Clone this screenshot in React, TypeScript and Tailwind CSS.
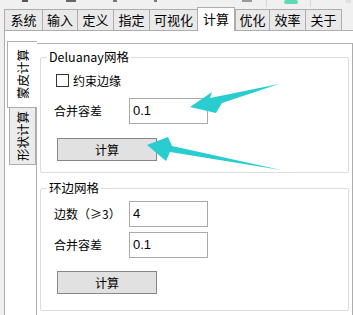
import React from "react";

const font = { fontFamily: '"Noto Sans CJK SC", "Noto Sans", sans-serif' };

function TopTab({ label, w, selected }: { label: string; w: number; selected?: boolean }) {
  return (
    <div
      style={{ width: w }}
      className={
        selected
          ? "relative z-20 -mb-px flex h-[24px] items-start justify-center border border-b-0 border-[#adadad] bg-white pt-[2px] text-[13px] leading-[18px] text-black"
          : "flex h-[21px] items-center justify-center border border-b-0 border-[#adadad] bg-[#e9e9e9] text-[13px] leading-[18px] text-black -mr-px"
      }
    >
      {label}
    </div>
  );
}

function GroupBox({ title, h, children }: { title: string; h: number; children: React.ReactNode }) {
  return (
    <div style={{ height: h }} className="flex w-[309px] flex-col rounded-[2px] border border-[#dcdcdc]">
      <div className="-mt-[9px] ml-[6px] h-[16px] w-fit bg-white px-[2px] text-[12.5px] leading-[16px] text-black">
        {title}
      </div>
      {children}
    </div>
  );
}

function Field({ label, value, mt }: { label: string; value: string; mt: number }) {
  return (
    <div style={{ marginTop: mt }} className="flex h-[26px] items-center pl-[13px]">
      <div className="w-[75px] text-[12px] leading-[16px] text-black">{label}</div>
      <div
        className="flex h-[26px] w-[79px] items-center border border-[#a9a9a9] bg-white pl-[3px] text-[13px] text-black"
        style={{ fontFamily: '"Liberation Sans", Arial, sans-serif' }}
      >
        {value}
      </div>
    </div>
  );
}

function Btn({ mt, h }: { mt: number; h: number }) {
  return (
    <div style={{ marginTop: mt, height: h }} className="ml-[16px] flex w-[100px] items-center justify-center border border-[#888888] bg-[#e1e1e1] text-[12px] leading-[16px] text-black">
      计算
    </div>
  );
}

export default function App() {
  return (
    <div style={font} className="relative flex h-[315px] w-[353px] flex-col overflow-hidden bg-[#f0f0f0]">
      <svg className="h-[9px] w-[353px] shrink-0" viewBox="0 0 353 9">
        <rect x="22" y="0" width="6" height="2" fill="#555" />
        <rect x="66" y="0" width="10" height="2" fill="#666" />
        <rect x="113" y="0" width="4" height="2" fill="#777" />
        <rect x="154" y="0" width="3" height="2" fill="#777" />
        <rect x="242" y="0" width="10" height="2" fill="#999" />
        <rect x="266" y="0" width="1" height="7" fill="#d8d8d8" />
        <rect x="284" y="0" width="14" height="4" rx="2" fill="#5fd8b8" />
        <rect x="310" y="0" width="1" height="7" fill="#d8d8d8" />
        <rect x="346" y="0" width="5" height="3" fill="#e0e0e0" />
      </svg>
      <div className="flex h-[21px] shrink-0 items-end pl-[4px]">
        <TopTab label="系统" w={39} />
        <TopTab label="输入" w={36} />
        <TopTab label="定义" w={37} />
        <TopTab label="指定" w={37} />
        <TopTab label="可视化" w={49} />
        <TopTab label="计算" w={38} selected />
        <TopTab label="优化" w={35} />
        <TopTab label="效率" w={37} />
        <TopTab label="关于" w={37} />
      </div>
      <div className="ml-[4px] flex flex-1 border-l border-t border-[#adadad] bg-white pl-[2px] pt-[12px]">
        <div className="relative z-10 flex w-[29px] shrink-0 flex-col">
          <div className="-mt-[2px] flex h-[67px] w-[30px] items-center justify-center border border-r-0 border-[#adadad] bg-white">
            <span className="rotate-180 text-[12.5px] leading-[16px] text-black [text-orientation:sideways] [writing-mode:vertical-rl]">
              蒙皮计算
            </span>
          </div>
          <div className="ml-[2px] -mt-px flex h-[58px] w-[27px] items-center justify-center border border-[#adadad] bg-[#ececec]">
            <span className="rotate-180 text-[12.5px] leading-[16px] text-black [text-orientation:sideways] [writing-mode:vertical-rl]">
              形状计算
            </span>
          </div>
        </div>
        <div className="flex flex-1 flex-col border-l border-r border-t border-[#adadad] bg-white pl-[3px] pt-[13px]">
          <GroupBox title="Deluanay网格" h={116}>
            <div className="mt-[9px] flex h-[13px] items-center pl-[15px]">
              <div className="h-[13px] w-[13px] border border-[#333] bg-white" />
              <div className="ml-[4px] text-[12px] leading-[16px] text-black">约束边缘</div>
            </div>
            <Field label="合并容差" value="0.1" mt={11} />
            <Btn mt={14} h={23} />
          </GroupBox>
          <div className="h-[15px]" />
          <GroupBox title="环边网格" h={123}>
            <Field label="边数（≥3）" value="4" mt={5} />
            <Field label="合并容差" value="0.1" mt={5} />
            <Btn mt={13} h={23} />
          </GroupBox>
        </div>
      </div>
      <svg className="pointer-events-none absolute left-0 top-0 h-[315px] w-[353px]" viewBox="0 0 353 315">
        <polygon points="190,107 212,92 210,98 279,84 222,103 216,113" fill="#29cdd0" />
        <polygon points="147,145 168,137 172,146 281,170 170,152 166,161" fill="#29cdd0" />
      </svg>
    </div>
  );
}
